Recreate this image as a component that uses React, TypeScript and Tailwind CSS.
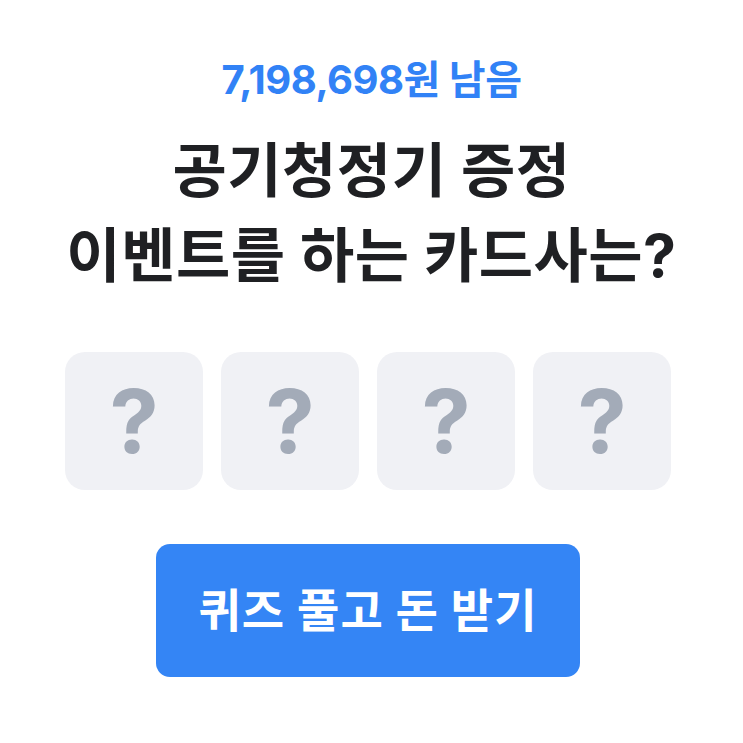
import React from 'react';

const slots = [0, 1, 2, 3];

const QuizCard: React.FC = () => {
  return (
    <div
      className="flex h-[743px] w-[743px] flex-col items-center bg-white"
      style={{ fontFamily: 'Inter, "Noto Sans CJK KR", sans-serif' }}
    >
      <p className="mt-[54px] text-[40px] font-bold leading-[52px] tracking-[-0.5px] text-[#3182f6]">
        7,198,698원 남음
      </p>

      <h1 className="mt-[22px] text-center text-[59px] font-bold leading-[85px] tracking-[0.5px] text-[#1f2023]">
        공기청정기 증정
        <br />
        이벤트를 하는 카드사는?
      </h1>

      <div className="mt-[54px] flex gap-[18px] pr-[7px]">
        {slots.map((i) => (
          <div
            key={i}
            className="flex h-[138px] w-[138px] items-center justify-center rounded-[20px] bg-[#f0f1f5]"
          >
            <span className="text-[88px] font-bold leading-none text-[#a3abb8]">?</span>
          </div>
        ))}
      </div>

      <button className="mt-[54px] mr-[7px] flex h-[133px] w-[424px] items-center justify-center rounded-[14px] bg-[#3485f5] text-[46px] font-bold tracking-[1px] text-white">
        퀴즈 풀고 돈 받기
      </button>
    </div>
  );
};

export default function App() {
  return <QuizCard />;
}
